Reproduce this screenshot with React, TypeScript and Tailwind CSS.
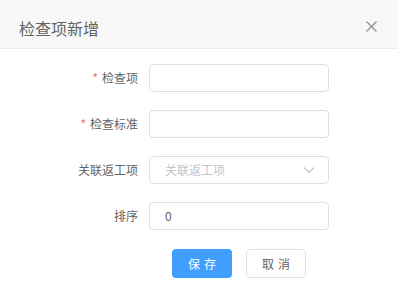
import React from "react";

const font = { fontFamily: '"Noto Sans CJK SC", "Noto Sans", sans-serif' };

type Row = { label: string; required?: boolean; kind: "input" | "select"; value?: string; placeholder?: string };

const rows: Row[] = [
  { label: "检查项", required: true, kind: "input" },
  { label: "检查标准", required: true, kind: "input" },
  { label: "关联返工项", kind: "select", placeholder: "关联返工项" },
  { label: "排序", kind: "input", value: "0" },
];

export default function App() {
  return (
    <div className="w-[398px] h-[307px] bg-white" style={font}>
      {/* header */}
      <div className="h-[49px] bg-[#f8f8f8] border-b border-[#ebebeb] flex items-center justify-between pl-[19px] pr-[21px]">
        <span className="text-[16px] text-[#606266] leading-none mt-[8px]">检查项新增</span>
        <svg width="11" height="11" viewBox="0 0 11 11" className="mt-[4px]">
          <path d="M0.5 0.5L10.5 10.5M10.5 0.5L0.5 10.5" stroke="#909399" strokeWidth="1.4" />
        </svg>
      </div>

      {/* form */}
      <div className="pt-[15px] flex flex-col gap-[18px]">
        {rows.map((r) => (
          <div key={r.label} className="flex items-center h-[28px]">
            <label className="w-[138px] text-right text-[12px] text-[#606266]">
              {r.required && <span className="text-[#f56c6c] mr-[4px]">*</span>}
              {r.label}
            </label>
            <div className="ml-[11px] w-[180px] h-[28px] border border-[#dcdfe6] rounded-[4px] flex items-center px-[15px] text-[12px]">
              {r.kind === "select" ? (
                <>
                  <span className="flex-1 text-[#c0c4cc]">{r.placeholder}</span>
                  <svg width="12" height="8" viewBox="0 0 12 8" className="-mr-[2px]">
                    <path d="M1 1.5L6 6.5L11 1.5" fill="none" stroke="#c0c4cc" strokeWidth="1.2" />
                  </svg>
                </>
              ) : (
                <span className="text-[#606266]">{r.value}</span>
              )}
            </div>
          </div>
        ))}
      </div>

      {/* buttons */}
      <div className="mt-[19px] flex gap-[14px] pl-[172px]">
        <button className="w-[60px] h-[29px] rounded-[4px] bg-[#409eff] text-white text-[12px] tracking-[4px] pl-[4px]">
          保存
        </button>
        <button className="w-[60px] h-[29px] rounded-[4px] border border-[#dcdfe6] bg-white text-[#606266] text-[12px] tracking-[4px] pl-[4px]">
          取消
        </button>
      </div>
    </div>
  );
}
